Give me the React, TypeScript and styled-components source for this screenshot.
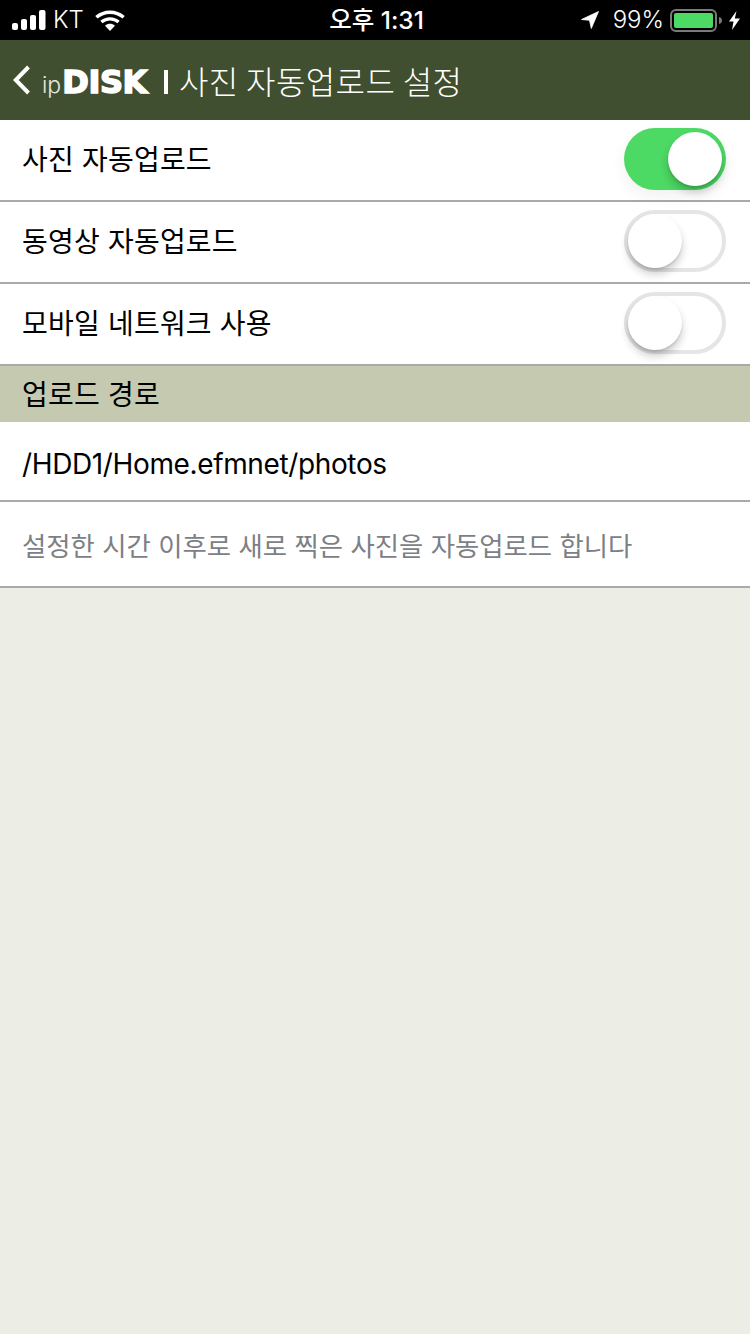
import React from "react";
import styled, { createGlobalStyle } from "styled-components";

const GlobalStyle = createGlobalStyle`
  html, body { margin: 0; padding: 0; background: #ecede4; }
  body { font-family: "Inter", "Noto Sans CJK KR", sans-serif; }
`;

const Page = styled.div`
  width: 750px;
  height: 1334px;
  overflow: hidden;
  background: #ecede4;
`;

const StatusBar = styled.div`
  height: 40px;
  background: #000;
  color: #fff;
  display: flex;
  align-items: center;
  justify-content: space-between;
  padding: 0 10px 0 12px;
  font-size: 24px;
  position: relative;
`;

const StatusSide = styled.div`
  display: flex;
  align-items: center;
`;

const Carrier = styled.span`
  margin: 0 11px 0 7px;
  font-weight: 300;
  line-height: 40px;
`;

const Clock = styled.span`
  position: absolute;
  left: 0;
  right: 0;
  top: 0;
  padding-left: 3px;
  text-align: center;
  line-height: 41px;
  font-size: 24.5px;
  font-weight: 500;
`;

const Percent = styled.span`
  margin: 0 6px 0 14px;
  font-weight: 300;
  line-height: 40px;
`;

const Header = styled.header`
  height: 80px;
  background: #404f2f;
  display: flex;
  align-items: center;
  padding: 0 0 0 13px;
  color: #fff;
`;

const Logo = styled.div`
  display: flex;
  align-items: baseline;
  margin-left: 11px;
  padding-top: 4px;
`;

const LogoSmall = styled.span`
  font-size: 23px;
  font-weight: 300;
  color: #e6e8e0;
  margin-right: 1px;
`;

const LogoBold = styled.span`
  font-family: "DejaVu Sans", sans-serif;
  font-size: 32px;
  font-weight: 700;
  letter-spacing: -0.4px;
  -webkit-text-stroke: 1.6px #fff;
`;

const Divider = styled.span`
  width: 4px;
  height: 24px;
  background: #fff;
  margin: 4px 11px 0 17px;
`;

const Title = styled.h1`
  margin: 0;
  font-size: 32px;
  font-weight: 300;
  font-family: "Noto Sans CJK KR", sans-serif;
  letter-spacing: 0.4px;
`;

const Row = styled.div<{ $height: number }>`
  height: ${(p) => p.$height}px;
  background: #fff;
  border-bottom: 2px solid #a9a9a9;
  display: flex;
  align-items: center;
  justify-content: space-between;
  padding: 0 24px 0 22px;
`;

const Label = styled.span`
  font-family: "Inter", "Noto Sans CJK KR", sans-serif;
  font-size: 28px;
  font-weight: 400;
  letter-spacing: 0.2px;
  color: #000;
  padding-bottom: 5px;
`;

const SectionLabel = styled(Label)`
  padding-bottom: 3px;
`;

const PathLabel = styled(Label)`
  letter-spacing: -0.37px;
  padding-top: 6px;
  padding-bottom: 0;
`;

const HintLabel = styled(Label)`
  font-size: 26.4px;
  letter-spacing: 0;
  color: #7c7f85;
  padding-bottom: 0;
`;

const SectionHead = styled.div`
  height: 56px;
  background: #c4c9b0;
  display: flex;
  align-items: center;
  padding: 0 22px;
`;

const TrackSlot = styled.div`
  padding-bottom: 2px;
`;

const Track = styled.div<{ $on: boolean }>`
  width: 102px;
  height: 62px;
  box-sizing: border-box;
  border-radius: 31px;
  position: relative;
  background: ${(p) => (p.$on ? "#4cd964" : "#fff")};
  border: ${(p) => (p.$on ? "none" : "4px solid #e5e5e5")};
  box-shadow: ${(p) => (p.$on ? "0 6px 16px rgba(0,0,0,0.06)" : "none")};
`;

const Knob = styled.div<{ $on: boolean }>`
  position: absolute;
  width: 54px;
  height: 54px;
  border-radius: 50%;
  background: #fff;
  top: ${(p) => (p.$on ? "4px" : "0")};
  ${(p) => (p.$on ? "right: 4px;" : "left: 0;")}
  box-shadow: 0 6px 8px rgba(0, 0, 0, 0.2), 0 2px 2px rgba(0, 0, 0, 0.1);
`;

const Toggle = ({ on }: { on: boolean }) => (
  <TrackSlot>
    <Track $on={on}>
      <Knob $on={on} />
    </Track>
  </TrackSlot>
);

const Signal = () => (
  <svg width="34" height="20" viewBox="0 0 34 20" fill="#fff">
    <rect x="0" y="13" width="6" height="7" rx="2" />
    <rect x="9" y="9" width="6" height="11" rx="2" />
    <rect x="18" y="5" width="6" height="15" rx="2" />
    <rect x="27" y="0" width="6.500" height="20" rx="2" />
  </svg>
);

const Wifi = () => (
  <svg width="30" height="21" viewBox="0 0 28 20">
    <path d="M1 7C8.500.5 19.500.5 27 7" fill="none" stroke="#fff" strokeWidth="3.2" />
    <path d="M5.800 11.500c4.800-4 11.600-4 16.400 0" fill="none" stroke="#fff" strokeWidth="3.2" />
    <path d="M9.300 15 14 20l4.700-5c-2.800-2.400-6.600-2.400-9.400 0z" fill="#fff" />
  </svg>
);

const Location = () => (
  <svg width="18" height="18" viewBox="0 0 18 18" fill="#fff" stroke="#fff" strokeWidth="0.8" strokeLinejoin="round">
    <path d="M17.500.5 .5 8.500l8 .8 1.800 8.200z" />
  </svg>
);

const Battery = () => (
  <svg width="53" height="23" viewBox="0 0 53 23">
    <rect x="1" y="1" width="45" height="21" rx="5" fill="none" stroke="#7a7a7a" strokeWidth="2" />
    <rect x="4" y="4" width="39" height="15" rx="2" fill="#4cd964" />
    <path d="M49 8c2 .5 3 1.700 3 3.500s-1 3-3 3.500z" fill="#7a7a7a" />
  </svg>
);

const BoltIcon = styled.svg`
  margin-left: 6px;
`;

const Bolt = () => (
  <BoltIcon width="11" height="19" viewBox="0 0 11 19" fill="#fff">
    <path d="M7.500 0 0 10.500h4.500L3 19l8-11.500H5.800z" />
  </BoltIcon>
);

const BackChevron = () => (
  <svg width="18" height="30" viewBox="0 0 18 30">
    <path d="M15.500 2 2.800 15l12.700 13" fill="none" stroke="#fff" strokeWidth="4" />
  </svg>
);

export default function App() {
  return (
    <Page>
      <GlobalStyle />
      <StatusBar>
        <StatusSide>
          <Signal />
          <Carrier>KT</Carrier>
          <Wifi />
        </StatusSide>
        <Clock>오후 1:31</Clock>
        <StatusSide>
          <Location />
          <Percent>99%</Percent>
          <Battery />
          <Bolt />
        </StatusSide>
      </StatusBar>
      <Header>
        <BackChevron />
        <Logo>
          <LogoSmall>ip</LogoSmall>
          <LogoBold>DISK</LogoBold>
        </Logo>
        <Divider />
        <Title>사진 자동업로드 설정</Title>
      </Header>
      <Row $height={80}>
        <Label>사진 자동업로드</Label>
        <Toggle on />
      </Row>
      <Row $height={80}>
        <Label>동영상 자동업로드</Label>
        <Toggle on={false} />
      </Row>
      <Row $height={80}>
        <Label>모바일 네트워크 사용</Label>
        <Toggle on={false} />
      </Row>
      <SectionHead>
        <SectionLabel>업로드 경로</SectionLabel>
      </SectionHead>
      <Row $height={78}>
        <PathLabel>/HDD1/Home.efmnet/photos</PathLabel>
      </Row>
      <Row $height={84}>
        <HintLabel>설정한 시간 이후로 새로 찍은 사진을 자동업로드 합니다</HintLabel>
      </Row>
    </Page>
  );
}
